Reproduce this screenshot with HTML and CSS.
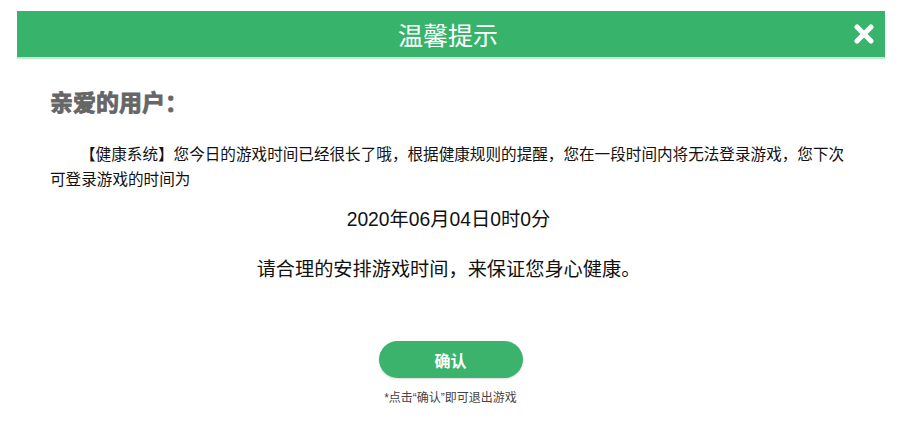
FILE: index.html
```html
<!DOCTYPE html>
<html lang="zh-CN">
<head>
    <meta charset="UTF-8">
    <meta name="viewport" content="width=device-width, initial-scale=1.0">
    <title>温馨提示</title>
    <link rel="stylesheet" href="styles.css">
</head>
<body>
    <div class="dialog">
        <header class="dialog-header">
            <span></span>
            <h1 class="dialog-title">温馨提示</h1>
            <button class="close-button" aria-label="关闭">
                <svg width="22" height="20" viewBox="0 0 22 20">
                    <path d="M4 3 L18 17 M18 3 L4 17" stroke="#fff" stroke-width="5" stroke-linecap="round"/>
                </svg>
            </button>
        </header>
        <div class="dialog-body">
            <h2 class="greeting">亲爱的用户：</h2>
            <p class="message">【健康系统】您今日的游戏时间已经很长了哦，根据健康规则的提醒，您在一段时间内将无法登录游戏，您下次可登录游戏的时间为</p>
            <div class="unlock-time">2020年06月04日0时0分</div>
            <div class="advice">请合理的安排游戏时间，来保证您身心健康。</div>
            <div class="actions">
                <button class="confirm-button">确认</button>
                <div class="note">*点击“确认”即可退出游戏</div>
            </div>
        </div>
    </div>
</body>
</html>
```

FILE: styles.css
```css
body {
    margin: 0;
    padding: 0;
    background-color: #ffffff;
    font-family: "Liberation Sans", "Noto Sans CJK SC", sans-serif;
    color: #111111;
}
.dialog {
    margin: 11px 24px 0 17px;
}
.dialog-header {
    display: grid;
    grid-template-columns: 1fr auto 1fr;
    align-items: center;
    height: 46px;
    padding: 0 10px 0 0;
    background-color: #37b36b;
    border-bottom: 2px solid #c4e8d2;
}
.dialog-title {
    margin: 0 0 0 4px;
    color: #ffffff;
    font-size: 25px;
    font-weight: normal;
}
.close-button {
    justify-self: end;
    display: flex;
    background: none;
    border: none;
    padding: 0;
    cursor: pointer;
}
.dialog-body {
    padding: 0 38px 0 33px;
}
.greeting {
    margin: 29px 0 0;
    font-size: 23px;
    line-height: 30px;
    font-weight: bold;
    color: #666666;
    -webkit-text-stroke: 0.9px #666666;
}
.message {
    margin: 24px 0 0;
    font-size: 15.6px;
    line-height: 25px;
    text-indent: 30px;
}
.unlock-time {
    margin-top: 16px;
    text-align: center;
    font-size: 19.3px;
    line-height: 24px;
}
.advice {
    margin-top: 25px;
    text-align: center;
    font-size: 19.2px;
    line-height: 26px;
}
.actions {
    display: flex;
    flex-direction: column;
    align-items: center;
    margin: 58px 0 0 4px;
}
.confirm-button {
    width: 144px;
    height: 37px;
    background-color: #3bb36c;
    color: #ffffff;
    border: none;
    border-radius: 19px;
    font-family: "Noto Sans CJK SC", sans-serif;
    font-size: 16px;
    font-weight: bold;
    box-shadow: 0 1px 2px rgba(0, 0, 0, 0.15);
    cursor: pointer;
}
.note {
    margin-top: 13px;
    font-size: 12px;
    line-height: 14px;
    color: #444444;
}
```
